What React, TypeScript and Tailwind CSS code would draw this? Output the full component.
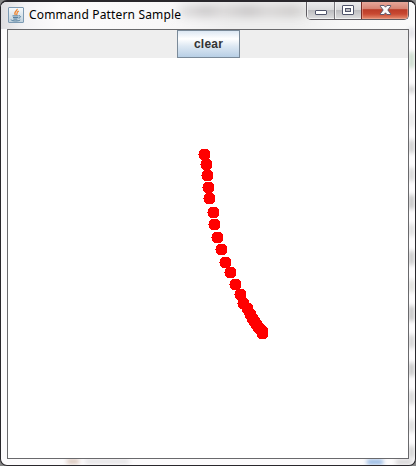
const strokePoints: [number, number][] = [
  [196.5, 96.5], [198.5, 106.5], [199.5, 117.5], [200.5, 129.5], [201.5, 140.5],
  [205.5, 154.5], [206.5, 166.5], [209.5, 179.5], [213.5, 191.5], [217.5, 204.5],
  [222.5, 214.5], [227.5, 226.5], [232.5, 236.5], [235.5, 245.5], [239.5, 250.5],
  [242.5, 256.5], [244.5, 260.5], [246.5, 263.5], [248.5, 266.5], [250.5, 269.5],
  [252.5, 271.5], [254.5, 273.5], [254.5, 275.5],
];

// Soft reflections in the translucent right-hand frame: [top, height, colour]
const glints: [number, number, string][] = [
  [28, 10, "#dcdce2"], [52, 16, "#c3d6c5"], [86, 7, "#c9c9c9"], [113, 14, "#e8e8e8"],
  [140, 13, "#c8c8c8"], [168, 13, "#d2d2d2"], [195, 14, "#bdbdbd"], [224, 12, "#dadada"],
  [251, 14, "#c2c2c2"], [280, 12, "#dcdcd8"], [306, 15, "#bdbdbd"], [335, 13, "#cecece"],
  [363, 13, "#bfbfbf"], [391, 13, "#d2d2d2"], [420, 12, "#d8d8d8"], [446, 12, "#cccccc"],
];

function JavaIcon() {
  return (
    <svg width="16" height="16" viewBox="0 0 16 16" className="shrink-0">
      <defs>
        <linearGradient id="tile" x2="0" y2="1">
          <stop stopColor="#f8fbfd" />
          <stop offset="1" stopColor="#bfd0dc" />
        </linearGradient>
      </defs>
      <rect x=".5" y=".5" width="15" height="15" rx=".5" fill="url(#tile)" stroke="#7d9ab3" />
      <path d="M9.2 1.8C9.6 4 5.2 4.8 7.3 8M10.8 4.2C8 5.2 9.8 6.3 8.4 8" fill="none" stroke="#ee8734" strokeWidth="1.3" />
      <path d="M4.5 8.9h6M5 10.6h5.3M5.4 12.1h4M10.8 8.8c2.8-.2 1.7 2.1-.2 2.4M3.2 12.6c-.5 1.7 7.8 1.8 9 .3" fill="none" stroke="#4c7899" strokeWidth="1" />
    </svg>
  );
}

function WindowControls() {
  return (
    <div className="flex h-[19px] w-[103px] overflow-hidden rounded-b-[5px] border border-t-0 border-[#5d5a60]">
      <button className="flex w-7 justify-center border-r border-[#77757b] bg-[linear-gradient(#ededef_0%,#dadadc_48%,#bbbbbf_50%,#dededf_100%)] shadow-[inset_1px_-1px_0_#f1f1f2]">
        <svg width="14" height="17" viewBox="0 0 14 17">
          <rect x="1.5" y="9.5" width="11" height="4" rx=".5" fill="#fff" stroke="#50546a" />
        </svg>
      </button>
      <button className="flex w-[27px] justify-center border-r border-[#772d26] bg-[linear-gradient(#ededef_0%,#dadadc_48%,#bbbbbf_50%,#dededf_100%)] shadow-[inset_1px_-1px_0_#f1f1f2]">
        <svg width="14" height="17" viewBox="0 0 14 17">
          <rect x="1.5" y="4.5" width="11" height="9" rx=".5" fill="#fff" stroke="#50546a" />
          <rect x="4.5" y="7.5" width="5" height="3" fill="#bdbdc2" stroke="#50546a" />
        </svg>
      </button>
      <button className="flex flex-1 justify-center bg-[linear-gradient(#e9ada0_0%,#d78272_44%,#bb3c28_48%,#c84932_72%,#e68e70_100%)] shadow-[inset_0_0_0_1px_#efac9b88]">
        <svg width="13" height="17" viewBox="0 0 13 17">
          <path d="M1.3 4.5h3.8l1.4 1.7 1.4-1.7h3.8v.7L8.8 9l2.9 3.8v.7H7.9l-1.4-1.7-1.4 1.7H1.3v-.7L4.2 9 1.3 5.2z" fill="#fafafa" stroke="#505064" strokeWidth=".9" />
        </svg>
      </button>
    </div>
  );
}

export default function App() {
  return (
    <div className="h-[466px] w-[416px] overflow-hidden bg-[#858585]">
      <div className="relative flex h-full flex-col overflow-hidden rounded-[7px] border border-t-2 border-[#29272c] bg-[#fcfbfc]">
        <div className="absolute inset-x-0 top-0 h-[27px] bg-[linear-gradient(90deg,#dedde0_0,#f4f3f5_24px,#fcfbfc_60px,#f7f6f7_180px,#eeeeee_230px,#eeeeee_290px,#f7f7f7_340px,#fafafa_100%)]" />
        <div className="absolute left-[178px] top-[3px] h-3 w-[130px] bg-[linear-gradient(90deg,#e4e3e4,#cccacb_20%,#dad8d8_34%,#c9c7c8_54%,#d9d7d7_68%,#cfcdcc_88%,#e4e4e4)] blur-[4px]" />
        {glints.map(([top, height, color]) => (
          <span
            key={top}
            className="absolute right-[1px] w-[5px] blur-[2px]"
            style={{ top: top - 2, height, backgroundColor: color }}
          />
        ))}
        <span className="absolute bottom-[2px] left-[66px] h-[3px] w-3 bg-[#c7a897] blur-[2px]" />
        <span className="absolute bottom-[2px] left-[84px] h-[3px] w-11 bg-[#d9d7da] blur-[2px]" />
        <span className="absolute bottom-[1px] left-[366px] h-1 w-4 bg-[#78a5dc] blur-[2px]" />
        <span className="absolute bottom-[1px] left-[395px] h-1 w-4 bg-[#cccacc] blur-[2px]" />

        <header className="relative flex h-[27px] shrink-0 items-start pl-[7px] pr-[6px]">
          <div className="flex items-center gap-[5px] pt-[5px]">
            <JavaIcon />
            <h1 className="whitespace-nowrap font-['Noto_Sans',sans-serif] text-[12px] leading-4 tracking-[0.16px] text-black">
              Command Pattern Sample
            </h1>
          </div>
          <div className="ml-auto -mt-px">
            <WindowControls />
          </div>
        </header>

        <main className="relative mx-[6px] flex h-[430px] shrink-0 flex-col border border-[#69696c] bg-white">
          <div className="flex h-7 shrink-0 justify-center bg-[#eeeeee] pl-px">
            <button className="h-7 w-[63px] border border-[#7a8a99] bg-[linear-gradient(#dde8f3_0%,#ffffff_30%,#dde8f3_58%,#b8cfe5_100%)] font-['Liberation_Sans',Arial,sans-serif] text-[12px] font-bold leading-[26px] tracking-[0.2px] text-[#333333]">
              clear
            </button>
          </div>
          <svg width="400" height="400" viewBox="0 0 400 400" shapeRendering="crispEdges" className="shrink-0 bg-white" fill="#ff0000">
            {strokePoints.map(([x, y], i) => (
              <path key={i} d={`M${x - 3.5} ${y - 5.5}h7v1h1v1h1v7h-1v1h-1v1h-7v-1h-1v-1h-1v-3h-1v-1h1v-3h1v-1h1z`} />
            ))}
          </svg>
        </main>
      </div>
    </div>
  );
}
